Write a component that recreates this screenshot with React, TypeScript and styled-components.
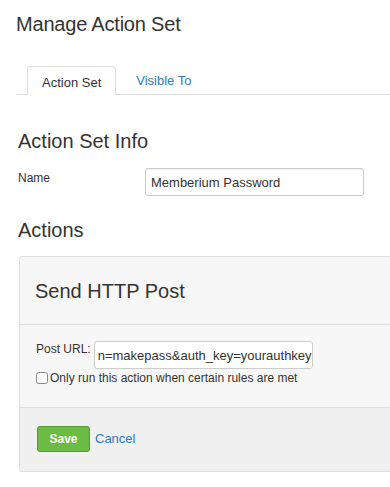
import React from 'react';
import styled, { createGlobalStyle } from 'styled-components';

const GlobalStyle = createGlobalStyle`
    html, body {
        margin: 0;
        padding: 0;
        background: #ffffff;
        overflow-x: hidden;
    }
    body {
        font-family: "Liberation Sans", Arial, sans-serif;
        color: #333333;
    }
`

const Page = styled.div`
    width: 390px;
    padding: 12px 0 16px 16px;
    box-sizing: border-box;
    overflow: hidden;
`

const Title = styled.h1`
    margin: 0;
    font-size: 20px;
    line-height: 24px;
    font-weight: 400;
    color: #333;
    letter-spacing: -0.2px;
`

const TabBar = styled.div`
    display: flex;
    align-items: flex-end;
    margin-top: 29px;
    padding-left: 11px;
    height: 29px;
    border-bottom: 1px solid #dddddd;
`

const Tab = styled.div<{ active?: boolean }>`
    height: ${props => props.active ? '29px' : '28px'};
    padding: 0 14px;
    margin-right: ${props => props.active ? '5px' : '0'};
    margin-bottom: ${props => props.active ? '-1px' : '0'};
    display: flex;
    align-items: center;
    font-size: 13px;
    color: ${props => props.active ? '#333' : '#2b7bbd'};
    background: #fff;
    border: 1px solid ${props => props.active ? '#dddddd' : 'transparent'};
    border-bottom: none;
    border-radius: 4px 4px 0 0;
    padding-top: ${props => props.active ? '3px' : '0'};
    box-sizing: border-box;
`

const Section = styled.div`
    padding-left: 2px;
`

const Heading = styled.h2<{ top: number }>`
    margin: ${props => props.top}px 0 0;
    font-size: 20px;
    line-height: 24px;
    font-weight: 400;
    color: #333;
`

const FieldRow = styled.div`
    display: flex;
    align-items: flex-start;
    margin-top: 15px;
`

const FieldLabel = styled.label`
    width: 127px;
    font-size: 12px;
    line-height: 14px;
    padding-top: 3px;
    color: #333;
`

const TextInput = styled.input`
    width: 219px;
    height: 28px;
    box-sizing: border-box;
    border: 1px solid #cccccc;
    border-radius: 3px;
    padding: 0 5px;
    font-family: "Liberation Sans", Arial, sans-serif;
    font-size: 13px;
    color: #333;
    box-shadow: inset 0 1px 1px rgba(0, 0, 0, 0.06);
    outline: none;
`

const Panel = styled.div`
    margin-top: 14px;
    margin-left: 3px;
    width: 400px;
    border: 1px solid #dddddd;
    border-right: none;
    border-radius: 3px 0 0 3px;
    background: #f7f7f7;
    overflow: hidden;
`

const PanelHeader = styled.div`
    height: 68px;
    display: flex;
    align-items: center;
    padding-left: 15px;
    border-bottom: 1px solid #dddddd;
    font-size: 20px;
    color: #333;
    padding-top: 1px;
    box-sizing: border-box;
`

const PanelBody = styled.div`
    padding: 16px 0 0 16px;
    height: 83px;
    box-sizing: border-box;
    border-bottom: 1px solid #dddddd;
`

const UrlRow = styled.div`
    display: flex;
    align-items: flex-start;
    gap: 3px;
`

const UrlLabel = styled.span`
    font-size: 12px;
    line-height: 15px;
    padding-top: 1px;
    color: #333;
`

const UrlField = styled.div`
    width: 219px;
    height: 28px;
    box-sizing: border-box;
    border: 1px solid #cccccc;
    border-radius: 3px;
    background: #fff;
    padding: 0 3px;
    display: flex;
    align-items: center;
    font-size: 13px;
    color: #333;
    white-space: nowrap;
    overflow: hidden;
`

const Caret = styled.span`
    display: inline-block;
    width: 1px;
    height: 16px;
    background: #222;
    margin-left: 1px;
`

const CheckRow = styled.label`
    display: flex;
    align-items: center;
    gap: 2px;
    margin-top: 2px;
    font-size: 12px;
    color: #333;
`

const Box = styled.span`
    width: 12px;
    height: 12px;
    border: 1px solid #888;
    border-radius: 3px;
    background: #fff;
    box-sizing: border-box;
`

const PanelFooter = styled.div`
    background: #f1f0f1;
    height: 63px;
    display: flex;
    align-items: center;
    gap: 5px;
    padding-left: 17px;
    padding-bottom: 2px;
    box-sizing: border-box;
`

const SaveButton = styled.button`
    width: 53px;
    height: 26px;
    border: 1px solid #519b2f;
    border-radius: 3px;
    background: #6cbb45;
    color: #fff;
    font-family: "Liberation Sans", Arial, sans-serif;
    font-weight: 700;
    font-size: 12px;
    padding: 0;
`

const CancelLink = styled.a`
    color: #2b7bbd;
    font-size: 13px;
    text-decoration: none;
`

const App: React.FC = () => {
    return (
        <>
            <GlobalStyle />
            <Page>
                <Title>Manage Action Set</Title>
                <TabBar>
                    <Tab active>Action Set</Tab>
                    <Tab>Visible To</Tab>
                </TabBar>
                <Section>
                    <Heading top={34}>Action Set Info</Heading>
                    <FieldRow>
                        <FieldLabel>Name</FieldLabel>
                        <TextInput defaultValue="Memberium Password" />
                    </FieldRow>
                    <Heading top={22}>Actions</Heading>
                </Section>
                <Panel>
                    <PanelHeader>Send HTTP Post</PanelHeader>
                    <PanelBody>
                        <UrlRow>
                            <UrlLabel>Post URL:</UrlLabel>
                            <UrlField>
                                n=makepass&amp;auth_key=yourauthkey<Caret />
                            </UrlField>
                        </UrlRow>
                        <CheckRow>
                            <Box />
                            Only run this action when certain rules are met
                        </CheckRow>
                    </PanelBody>
                    <PanelFooter>
                        <SaveButton>Save</SaveButton>
                        <CancelLink href="#">Cancel</CancelLink>
                    </PanelFooter>
                </Panel>
            </Page>
        </>
    )
}

export default App
